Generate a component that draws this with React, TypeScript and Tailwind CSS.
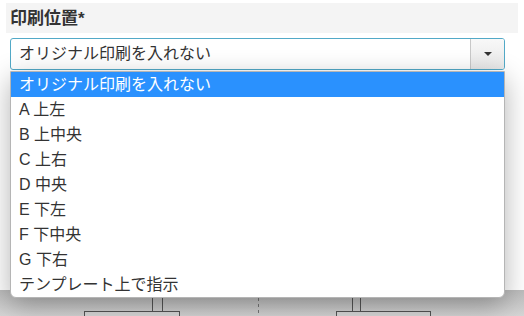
import React from "react";

const options = [
  "オリジナル印刷を入れない",
  "A 上左",
  "B 上中央",
  "C 上右",
  "D 中央",
  "E 下左",
  "F 下中央",
  "G 下右",
  "テンプレート上で指示",
];

const font = "font-['Liberation_Sans','Noto_Sans_CJK_JP',sans-serif]";

export default function App() {
  return (
    <div className={`relative w-[524px] h-[316px] overflow-hidden bg-white text-[#333] ${font}`}>
      {/* 下の図エリア（影） */}
      <div className="absolute bottom-0 left-0 h-[26px] w-full bg-gradient-to-b from-[#bcbcbc] to-[#d6d6d6]" />
      <svg className="absolute left-0 top-0" width="524" height="316">
        <line x1="152.5" y1="280" x2="152.5" y2="316" stroke="#555" />
        <line x1="162.5" y1="280" x2="162.5" y2="316" stroke="#555" />
        <rect x="84.5" y="311.5" width="95" height="20" fill="#d9d9d9" stroke="#555" />
        <line x1="258.5" y1="280" x2="258.5" y2="316" stroke="#777" strokeDasharray="3 3" />
        <line x1="352.5" y1="280" x2="352.5" y2="316" stroke="#555" />
        <line x1="360.5" y1="280" x2="360.5" y2="316" stroke="#555" />
        <rect x="336.5" y="311.5" width="94" height="20" fill="#d9d9d9" stroke="#555" />
      </svg>

      {/* 見出し */}
      <div className="relative mx-[6px] mt-[3px] flex h-[30px] items-center bg-[#f4f4f4] px-[4px]">
        <span className="text-[17px] font-bold leading-none text-[#333]">印刷位置*</span>
      </div>

      {/* セレクト */}
      <div className="relative ml-[10px] mt-[5px] flex h-[32px] w-[495px] rounded-[3px] border border-[#52a9c7] bg-white">
        <div className="flex flex-1 items-center pl-[8px] text-[16px] text-[#333]">
          オリジナル印刷を入れない
        </div>
        <div className="flex w-[34px] items-center justify-center rounded-r-[2px] border-l border-[#c8c8c8] bg-gradient-to-b from-[#f8f8f8] to-[#e8e8e8]">
          <span className="h-0 w-0 border-x-[4px] border-t-[4px] border-x-transparent border-t-[#333]" />
        </div>
      </div>

      {/* ドロップダウン */}
      <div className="absolute left-[10px] top-[71px] w-[495px] overflow-hidden rounded-b-[6px] border border-[#b5b5b5] bg-white shadow-[0_8px_28px_rgba(0,0,0,0.3)]">
        {options.map((o, i) => (
          <div
            key={o}
            className={`flex h-[25px] items-center pl-[8px] text-[16px] ${
              i === 0 ? "bg-[#2a91fe] text-white" : "text-[#333]"
            }`}
          >
            {o}
          </div>
        ))}
      </div>
    </div>
  );
}
